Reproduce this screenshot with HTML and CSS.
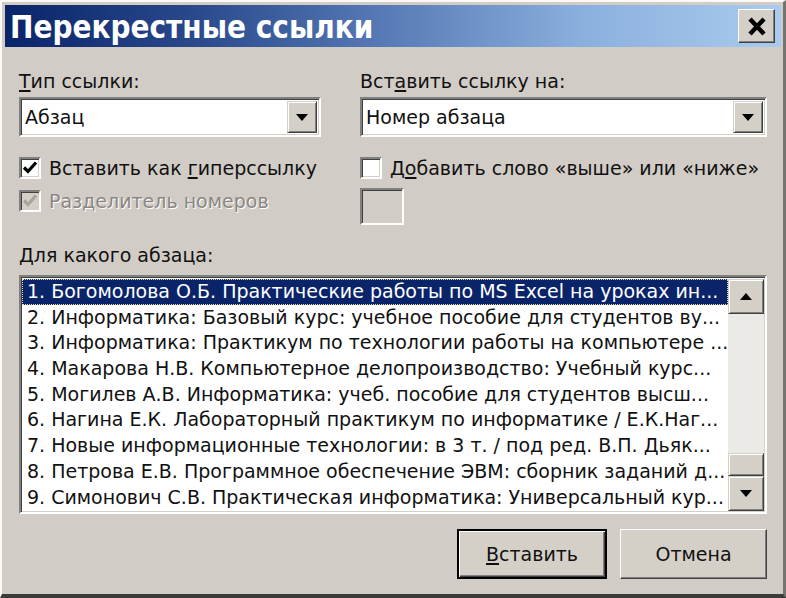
FILE: index.html
```html
<!DOCTYPE html>
<html lang="ru">
<head>
<meta charset="UTF-8">
<meta name="viewport" content="width=device-width, initial-scale=1.0">
<title>Перекрестные ссылки</title>
<link rel="stylesheet" href="styles.css">
</head>
<body>
<div class="window">
  <div class="titlebar">
    <span class="title">Перекрестные ссылки</span>
    <button class="close" type="button">
      <svg width="20" height="19" viewBox="0 0 20 19"><path d="M3 2 L17 17 M17 2 L3 17" stroke="#000" stroke-width="4.5" fill="none"/></svg>
    </button>
  </div>
  <div class="content">
    <div class="top">
      <div class="col col-left">
        <div class="lbl"><u>Т</u>ип ссылки:</div>
        <div class="combo">
          <span class="combo-text">Абзац</span>
          <span class="combo-btn"><svg width="12" height="7" viewBox="0 0 12 7"><polygon points="0,0 12,0 6,7" fill="#000"/></svg></span>
        </div>
        <div class="check">
          <span class="box"><svg width="18" height="18" viewBox="0 0 18 18"><path d="M3 8.5 L7 12.5 L15 3.5" stroke="#000" stroke-width="3.2" fill="none"/></svg></span>
          <span>Вставить как <u>г</u>иперссылку</span>
        </div>
        <div class="check disabled">
          <span class="box"><svg width="18" height="18" viewBox="0 0 18 18"><path d="M3 8.5 L7 12.5 L15 3.5" stroke="#a9a59e" stroke-width="3.2" fill="none"/></svg></span>
          <span>Разделитель номеров</span>
        </div>
      </div>
      <div class="col col-right">
        <div class="lbl">Вст<u>а</u>вить ссылку на:</div>
        <div class="combo">
          <span class="combo-text">Номер абзаца</span>
          <span class="combo-btn"><svg width="12" height="7" viewBox="0 0 12 7"><polygon points="0,0 12,0 6,7" fill="#000"/></svg></span>
        </div>
        <div class="check">
          <span class="box"></span>
          <span>Д<u>о</u>бавить слово «выше» или «ниже»</span>
        </div>
        <div class="field"></div>
      </div>
    </div>

    <div class="lbl list-label"><u>Д</u>ля какого абзаца:</div>
    <div class="listbox">
      <ul class="items">
        <li class="selected">1. Богомолова О.Б. Практические работы по MS Excel на уроках ин...</li>
        <li>2. Информатика: Базовый курс: учебное пособие для студентов ву...</li>
        <li>3. Информатика: Практикум по технологии работы на компьютере ...</li>
        <li>4. Макарова Н.В. Компьютерное делопроизводство: Учебный курс...</li>
        <li>5. Могилев А.В. Информатика: учеб. пособие для студентов высш...</li>
        <li>6. Нагина Е.К. Лабораторный практикум по информатике / Е.К.Наг...</li>
        <li>7. Новые информационные технологии: в 3 т. / под ред. В.П. Дьяк...</li>
        <li>8. Петрова Е.В. Программное обеспечение ЭВМ: сборник заданий д...</li>
        <li>9. Симонович С.В. Практическая информатика: Универсальный кур...</li>
      </ul>
      <div class="scrollbar">
        <span class="sb-btn"><svg width="12" height="7" viewBox="0 0 12 7"><polygon points="0,7 12,7 6,0" fill="#000"/></svg></span>
        <span class="sb-track"></span>
        <span class="sb-thumb"></span>
        <span class="sb-btn"><svg width="12" height="7" viewBox="0 0 12 7"><polygon points="0,0 12,0 6,7" fill="#000"/></svg></span>
      </div>
    </div>

    <div class="buttons">
      <button class="btn default" type="button"><u>В</u>ставить</button>
      <button class="btn cancel" type="button">Отмена</button>
    </div>
  </div>
</div>
</body>
</html>
```

FILE: styles.css
```css
body {
    margin: 0;
    padding: 0;
    background-color: #d4d0c8;
    font-family: "DejaVu Sans", Verdana, sans-serif;
    font-size: 19px;
    color: #111;
}
.window {
    width: 786px;
    height: 598px;
    box-sizing: border-box;
    background-color: #d1cdc6;
    border-style: solid;
    border-width: 2px 3px 4px 2px;
    border-color: #fbfaf8 #77746f #3c3b39 #fbfaf8;
    padding: 3px 2px 2px 3px;
    display: flex;
    flex-direction: column;
}
.titlebar {
    height: 42px;
    flex-shrink: 0;
    display: flex;
    align-items: center;
    justify-content: space-between;
    padding: 0 6px 0 5px;
    background: linear-gradient(to right, #0a246a 0%, #2a4a8c 25%, #5a7cb8 50%, #8cb0de 75%, #a9cbee 100%);
}
.title {
    display: inline-block;
    color: #fff;
    font-weight: bold;
    font-size: 28px;
    line-height: 36px;
    margin-top: 4px;
    transform: scaleY(1.15);
    transform-origin: left center;
}
.close {
    width: 37px;
    height: 34px;
    padding: 0;
    margin: 0;
    display: flex;
    align-items: center;
    justify-content: center;
    background-color: #d4d0c8;
    border: 1px solid;
    border-color: #fff #404040 #404040 #fff;
    box-shadow: inset -1px -1px #808080;
}
.content {
    flex: 1;
    display: flex;
    flex-direction: column;
    padding: 23px 14px 0 14px;
}
.top {
    display: flex;
    gap: 39px;
}
.col {
    display: flex;
    flex-direction: column;
}
.col-left {
    width: 302px;
}
.col-right {
    width: 407px;
}
.lbl {
    height: 22px;
    line-height: 22px;
    white-space: nowrap;
}
u {
    text-decoration-thickness: 2px;
    text-underline-offset: 2px;
}
.combo {
    margin-top: 5px;
    height: 40px;
    box-sizing: border-box;
    display: flex;
    align-items: stretch;
    background-color: #fff;
    border: 2px solid;
    border-color: #808080 #fff #fff #808080;
    box-shadow: inset 1px 1px #404040, inset -1px -1px #d4d0c8;
    padding: 2px;
}
.combo-text {
    flex: 1;
    padding-left: 2px;
    line-height: 32px;
}
.combo-btn {
    width: 30px;
    box-sizing: border-box;
    display: flex;
    align-items: center;
    justify-content: center;
    background-color: #d4d0c8;
    border: 1px solid;
    border-color: #d4d0c8 #404040 #404040 #d4d0c8;
    box-shadow: inset 1px 1px #fff, inset -1px -1px #808080;
}
.check {
    margin-top: 20px;
    height: 22px;
    display: flex;
    align-items: center;
    gap: 8px;
    white-space: nowrap;
}
.check.disabled {
    margin-top: 11px;
    color: #8a8782;
    text-shadow: 1px 1px #fff;
}
.box {
    width: 22px;
    height: 22px;
    box-sizing: border-box;
    flex-shrink: 0;
    display: flex;
    align-items: center;
    justify-content: center;
    background-color: #fff;
    border: 2px solid;
    border-color: #808080 #fff #fff #808080;
    box-shadow: inset 1px 1px #404040, inset -1px -1px #d4d0c8;
}
.disabled .box {
    background-color: #d4d0c8;
}
.field {
    margin-top: 9px;
    width: 44px;
    height: 37px;
    box-sizing: border-box;
    border: 2px solid;
    border-color: #808080 #fff #fff #808080;
    box-shadow: inset 1px 1px #404040, inset -1px -1px #d4d0c8;
}
.list-label {
    margin-top: 19px;
}
.listbox {
    margin-top: 9px;
    height: 239px;
    box-sizing: border-box;
    display: flex;
    background-color: #fff;
    border: 2px solid;
    border-color: #808080 #fff #fff #808080;
    box-shadow: inset 1px 1px #404040, inset -1px -1px #d4d0c8;
    padding: 2px 1px 1px 1px;
}
.items {
    flex: 1;
    margin: 0;
    padding: 0;
    list-style: none;
    overflow: hidden;
}
.items li {
    height: 25.7px;
    line-height: 25.7px;
    padding-left: 5px;
    white-space: nowrap;
    overflow: hidden;
}
.items li.selected {
    background-color: #0a246a;
    color: #fff;
    outline: 1px dotted #e8e0a0;
    outline-offset: -1px;
}
.scrollbar {
    width: 36px;
    display: flex;
    flex-direction: column;
    background-color: #eceae6;
}
.sb-btn, .sb-thumb {
    box-sizing: border-box;
    display: flex;
    align-items: center;
    justify-content: center;
    background-color: #d4d0c8;
    border: 1px solid;
    border-color: #d4d0c8 #404040 #404040 #d4d0c8;
    box-shadow: inset 1px 1px #fff, inset -1px -1px #808080;
}
.sb-btn {
    height: 35px;
}
.sb-track {
    flex: 1;
}
.sb-thumb {
    height: 23px;
}
.buttons {
    margin-top: 15px;
    display: flex;
    justify-content: flex-end;
    gap: 13px;
}
.btn {
    height: 50px;
    box-sizing: border-box;
    font-family: inherit;
    font-size: 19px;
    color: #111;
    background-color: #d4d0c8;
    border: 1px solid;
    border-color: #fff #404040 #404040 #fff;
    box-shadow: inset -1px -1px #808080;
    padding: 0;
}
.btn.default {
    width: 150px;
    border: 2px solid #000;
    box-shadow: inset 1px 1px #fff, inset -1px -1px #404040, inset -2px -2px #808080;
}
.btn.cancel {
    width: 147px;
}
```
